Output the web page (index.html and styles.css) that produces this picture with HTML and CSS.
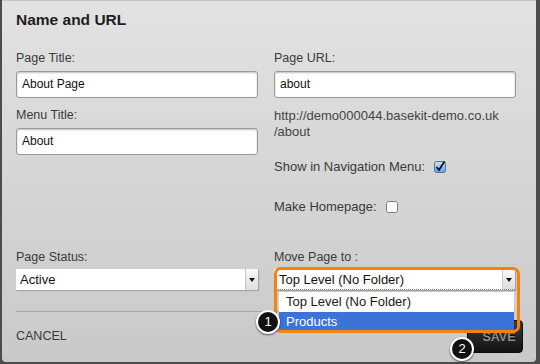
FILE: index.html
```html
<!DOCTYPE html>
<html lang="en">
<head>
    <meta charset="UTF-8">
    <meta name="viewport" content="width=device-width, initial-scale=1.0">
    <link rel="stylesheet" href="styles.css">
    <title>Name and URL</title>
</head>
<body>
    <div class="dialogo">
        <h1>Name and URL</h1>

        <div class="columnas">
            <div class="col">
                <label class="etiqueta">Page Title:</label>
                <div class="campo">About Page</div>
                <label class="etiqueta sep">Menu Title:</label>
                <div class="campo">About</div>
            </div>
            <div class="col">
                <label class="etiqueta">Page URL:</label>
                <div class="campo">about</div>
                <p class="url">http://demo000044.basekit-demo.co.uk<br>/about</p>
                <div class="check-fila nav">
                    <span>Show in Navigation Menu:</span>
                    <svg width="12" height="12" viewBox="0 0 12 12">
                        <defs>
                            <linearGradient id="azul" x1="0" y1="0" x2="0" y2="1">
                                <stop offset="0" stop-color="#cfe6fb"/>
                                <stop offset="1" stop-color="#5fa4e6"/>
                            </linearGradient>
                        </defs>
                        <rect x="0.5" y="0.5" width="11" height="11" rx="2" fill="url(#azul)" stroke="#4a78a8"/>
                        <path d="M2.5 6 L5 9 L10.5 0.5" fill="none" stroke="#111" stroke-width="1.8"/>
                    </svg>
                </div>
                <div class="check-fila home">
                    <span>Make Homepage:</span>
                    <svg width="12" height="12" viewBox="0 0 12 12">
                        <rect x="0.5" y="0.5" width="11" height="11" rx="2" fill="#fbfbfb" stroke="#7d7d7d"/>
                    </svg>
                </div>
            </div>
        </div>

        <div class="columnas abajo">
            <div class="col">
                <label class="etiqueta">Page Status:</label>
                <div class="selector"><span>Active</span><i class="flecha"></i></div>
            </div>
            <div class="col">
                <label class="etiqueta">Move Page to :</label>
                <div class="selector abierto"><span>Top Level (No Folder)</span><i class="flecha"></i></div>
            </div>
        </div>

        <div class="linea"></div>

        <div class="pie">
            <span class="cancelar">CANCEL</span>
            <button class="guardar">SAVE</button>
        </div>

        <!-- lista desplegada y marcas encima -->
        <div class="lista">
            <div class="opcion">Top Level (No Folder)</div>
            <div class="opcion activa">Products</div>
        </div>
        <div class="resalte"></div>
        <div class="paso uno">1</div>
        <div class="paso dos">2</div>
    </div>
</body>
</html>
```

FILE: styles.css
```css
* {
    margin: 0;
    padding: 0;
    box-sizing: border-box;
}
body {
    background-color: #4c4c4c;
    font-family: "Liberation Sans", Arial, sans-serif;
    color: #333;
    width: 540px;
    height: 364px;
    overflow: hidden;
}
.dialogo {
    position: relative;
    width: 534px;
    height: 362px;
    margin-left: 2px;
    padding: 11px 21px 0 14px;
    background: linear-gradient(#e2e2e2, #c9c9c9);
    border-top: 1px solid #c4c4c4;
    border-radius: 0 0 4px 4px;
}
h1 {
    font-size: 15.5px;
    line-height: 18px;
    color: #1e1e1e;
    margin-top: -1px;
}
.columnas {
    display: grid;
    grid-template-columns: 242px 242px;
    column-gap: 16px;
    margin-top: 21px;
}
.columnas.abajo {margin-top: 34px;}
.etiqueta {
    display: block;
    font-size: 12.5px;
    line-height: 16px;
    color: #3a3a3a;
}
.etiqueta.sep {margin-top: 9px;}
.campo {
    margin-top: 5px;
    height: 27px;
    background: #fff;
    border: 1px solid #9a9a9a;
    border-radius: 3px;
    box-shadow: inset 0 1px 2px rgba(0,0,0,0.25);
    font-size: 12px;
    line-height: 25px;
    padding-left: 5px;
    color: #111;
}
.url {
    margin-top: 10px;
    font-size: 13px;
    line-height: 16px;
    color: #444;
}
.check-fila {
    display: flex;
    align-items: center;
    gap: 9px;
    font-size: 13px;
    line-height: 16px;
    color: #3a3a3a;
}
.check-fila.nav {margin-top: 19px;}
.check-fila.home {margin-top: 24px;}
.selector {
    display: flex;
    margin-top: 4px;
    height: 21px;
    background: #fff;
    box-shadow: 1px 1px 1px rgba(0,0,0,0.2);
    font-size: 13px;
    line-height: 21px;
    color: #111;
}
.selector span {
    flex: 1;
    padding-left: 4px;
}
.selector.abierto {
    width: 241px;
    border-bottom: 1px dotted #777;
}
.selector.abierto span {padding-left: 5px;}
.flecha {
    position: relative;
    width: 13px;
    background: linear-gradient(#fafafa, #dedede);
    border-left: 1px solid #c9c9c9;
}
.flecha::after {
    content: "";
    position: absolute;
    left: 3px;
    top: 9px;
    border-left: 3px solid transparent;
    border-right: 3px solid transparent;
    border-top: 4px solid #111;
}
.linea {
    margin-top: 21px;
    height: 1px;
    width: 499px;
    background: #a6a6a6;
}
.pie {
    display: flex;
    justify-content: space-between;
    align-items: flex-start;
    margin-top: 8px;
    margin-right: -8px;
}
.cancelar {
    margin-top: 8px;
    font-size: 12.5px;
    line-height: 16px;
    color: #3a3a3a;
}
.guardar {
    width: 56px;
    height: 33px;
    border: 1px solid #0c0c0c;
    border-radius: 4px;
    background: linear-gradient(#3c3c3c, #111);
    color: #8e8e8e;
    font-family: "Liberation Sans", Arial, sans-serif;
    font-size: 12.5px;
    font-weight: bold;
    padding-left: 8px;
    text-shadow: 0 -1px 0 #000;
}
.lista {
    position: absolute;
    left: 277px;
    top: 291px;
    width: 235px;
    background: #fff;
    font-size: 13px;
    line-height: 20px;
    color: #1a1a1a;
}
.opcion {padding-left: 7px;}
.opcion.activa {
    background: #3b74d6;
    color: #fff;
}
.resalte {
    position: absolute;
    left: 272px;
    top: 266px;
    width: 246px;
    height: 66px;
    border: 3px solid #f5820c;
    border-radius: 7px;
}
.paso {
    position: absolute;
    width: 24px;
    height: 24px;
    border-radius: 50%;
    background: #111;
    border: 2px solid #fff;
    box-shadow: 0 1px 2px rgba(0,0,0,0.6);
    color: #fff;
    font-size: 13px;
    line-height: 20px;
    text-align: center;
}
.paso.uno {left: 254px; top: 309px;}
.paso.dos {left: 448px; top: 336px;}
```
